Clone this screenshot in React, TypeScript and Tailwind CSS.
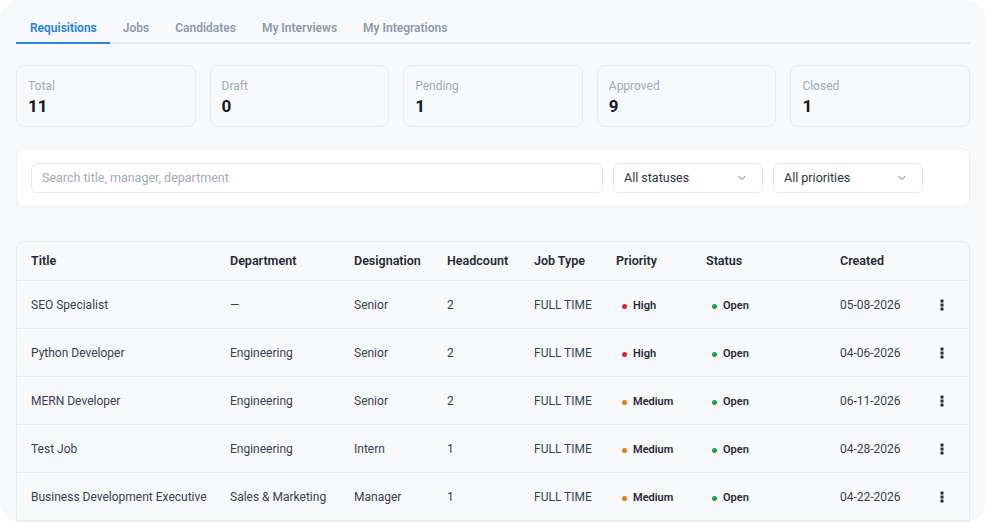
const tabs = ["Requisitions", "Jobs", "Candidates", "My Interviews", "My Integrations"];

const stats = [
  { label: "Total", value: 11 },
  { label: "Draft", value: 0 },
  { label: "Pending", value: 1 },
  { label: "Approved", value: 9 },
  { label: "Closed", value: 1 },
];

const rows = [
  { title: "SEO Specialist", dept: "—", desig: "Senior", head: 2, type: "FULL TIME", priority: "High", created: "05-08-2026" },
  { title: "Python Developer", dept: "Engineering", desig: "Senior", head: 2, type: "FULL TIME", priority: "High", created: "04-06-2026" },
  { title: "MERN Developer", dept: "Engineering", desig: "Senior", head: 2, type: "FULL TIME", priority: "Medium", created: "06-11-2026" },
  { title: "Test Job", dept: "Engineering", desig: "Intern", head: 1, type: "FULL TIME", priority: "Medium", created: "04-28-2026" },
  { title: "Business Development Executive", dept: "Sales & Marketing", desig: "Manager", head: 1, type: "FULL TIME", priority: "Medium", created: "04-22-2026" },
];

const priorityDot: Record<string, string> = {
  High: "bg-[#dc2626]",
  Medium: "bg-[#e8790c]",
};

const headers = ["Title", "Department", "Designation", "Headcount", "Job Type", "Priority", "Status", "Created"];

function Chevron() {
  return (
    <svg width="12" height="12" viewBox="0 0 12 12" fill="none" aria-hidden>
      <path d="M3 4.5 6 7.5 9 4.5" stroke="#a9b1bd" strokeWidth="1.1" strokeLinecap="round" strokeLinejoin="round" />
    </svg>
  );
}

function Kebab() {
  return (
    <svg width="4" height="12" viewBox="0 0 4 12" aria-hidden>
      <rect x="0.5" y="0.5" width="3" height="3" rx="0.6" fill="#1f2937" />
      <rect x="0.5" y="4.5" width="3" height="3" rx="0.6" fill="#1f2937" />
      <rect x="0.5" y="8.5" width="3" height="3" rx="0.6" fill="#1f2937" />
    </svg>
  );
}

function Select({ label }: { label: string }) {
  return (
    <div className="flex h-[30px] w-[150px] items-center justify-between rounded-md border border-[#e6eaf0] bg-white pr-[14px] pl-[10px] text-[12.5px] text-[#2b3443]">
      <span className="pt-[2px]">{label}</span>
      <Chevron />
    </div>
  );
}

function Dot({ color, label }: { color: string; label: string }) {
  return (
    <span className="inline-flex items-center gap-[6px] pl-[6px] text-[11px] font-semibold text-[#1f2937]">
      <span className={`h-[5px] w-[5px] rounded-full ${color}`} />
      {label}
    </span>
  );
}

export default function App() {
  return (
    <div className="h-[522px] w-[986px] bg-white font-['Roboto','Noto_Sans',sans-serif]">
      <div className="h-full overflow-hidden rounded-[20px] bg-[#f8f9fb] px-4 pt-[12px]">
        {/* Tabs */}
        <nav className="flex border-b-2 border-[#e4e9f0]">
          {tabs.map((t, i) => (
            <button
              key={t}
              className={`-mb-[2px] h-[32px] border-b-2 px-[13px] pt-[2px] text-[12px] font-semibold ${
                i === 0 ? "border-[#2686e0] pl-[14px] text-[#2381db]" : "border-transparent text-[#8d99ab]"
              }`}
            >
              {t}
            </button>
          ))}
        </nav>

        {/* Stats */}
        <div className="mt-[21px] grid grid-cols-5 gap-[14px]">
          {stats.map((s) => (
            <div key={s.label} className="h-[62px] rounded-lg border border-[#e8ebf0] px-[11px] pt-[11px]">
              <p className="text-[12px] leading-[18px] text-[#a1abbb]">{s.label}</p>
              <p className="text-[17px] font-bold leading-[22px] text-[#111827]">{s.value}</p>
            </div>
          ))}
        </div>

        {/* Filters */}
        <div className="mt-[21px] flex h-[59px] items-center gap-[10px] rounded-lg border border-[#eceff3] bg-white px-[14px]">
          <div className="flex h-[30px] w-[572px] items-center rounded-md border border-[#e6eaf0] bg-white px-[10px] pt-[2px] text-[12.5px] text-[#a3abb8]">
            Search title, manager, department
          </div>
          <Select label="All statuses" />
          <Select label="All priorities" />
        </div>

        {/* Table */}
        <div className="mt-[34px] overflow-hidden rounded-t-lg border border-[#e8ecf1]">
          <table className="w-full table-fixed border-collapse text-left text-[12px] text-[#374151]">
            <colgroup>
              <col className="w-[199px]" />
              <col className="w-[124px]" />
              <col className="w-[93px]" />
              <col className="w-[87px]" />
              <col className="w-[82px]" />
              <col className="w-[90px]" />
              <col className="w-[134px]" />
              <col className="w-[94px]" />
              <col />
            </colgroup>
            <thead>
              <tr className="h-[38px] border-b border-[#e8ecf1] text-[12.5px] text-[#1f2937]">
                {headers.map((h) => (
                  <th key={h} className="pt-[1px] pl-[14px] font-semibold">
                    {h}
                  </th>
                ))}
                <th />
              </tr>
            </thead>
            <tbody>
              {rows.map((r) => (
                <tr key={r.title} className="h-[48px] border-b border-[#e8ecf1] [&>td]:pt-[2px] [&>td]:pl-[14px]">
                  <td>{r.title}</td>
                  <td>{r.dept}</td>
                  <td>{r.desig}</td>
                  <td>{r.head}</td>
                  <td>{r.type}</td>
                  <td>
                    <Dot color={priorityDot[r.priority]} label={r.priority} />
                  </td>
                  <td>
                    <Dot color="bg-[#16a34a]" label="Open" />
                  </td>
                  <td>{r.created}</td>
                  <td className="!pl-[20px]">
                    <Kebab />
                  </td>
                </tr>
              ))}
            </tbody>
          </table>
        </div>
      </div>
    </div>
  );
}
